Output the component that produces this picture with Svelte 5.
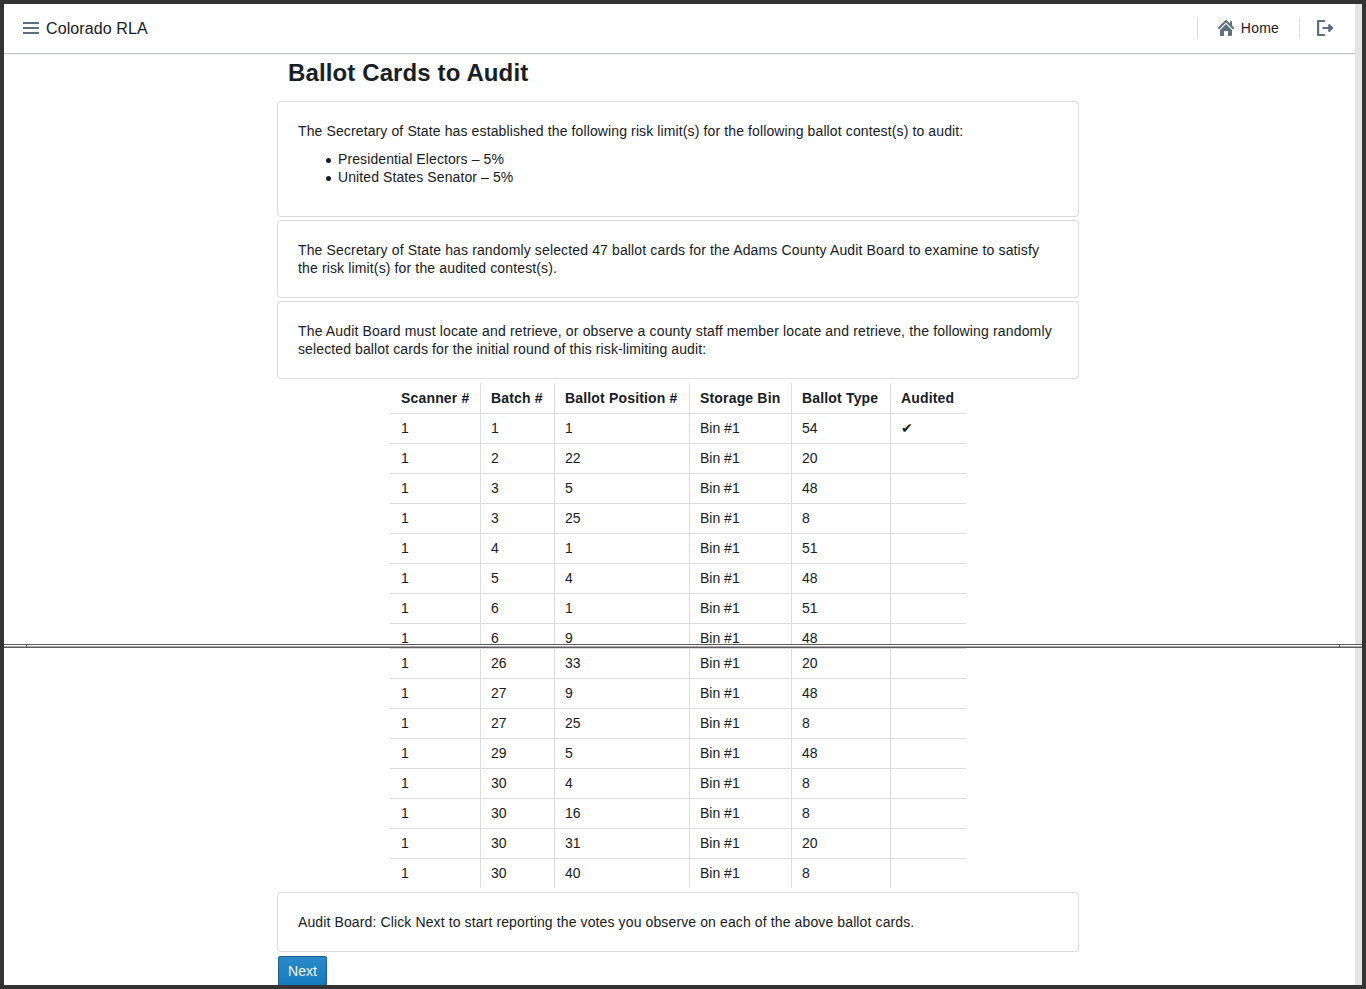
<script>
  const contests = ['Presidential Electors – 5%', 'United States Senator – 5%'];
  const first = [
    [1, 1, 54, true], [2, 22, 20], [3, 5, 48], [3, 25, 8],
    [4, 1, 51], [5, 4, 48], [6, 1, 51], [6, 9, 48]
  ];
  const last = [
    [26, 33, 20], [27, 9, 48], [27, 25, 8], [29, 5, 48],
    [30, 4, 8], [30, 16, 8], [30, 31, 20], [30, 40, 8]
  ];
</script>

{#snippet row(r)}
  <div class="row">
    <span>1</span><span>{r[0]}</span><span>{r[1]}</span><span>Bin #1</span><span>{r[2]}</span><span>{r[3] ? '✔' : ''}</span>
  </div>
{/snippet}

<div class="window">
  <div class="page">
    <header>
      <div class="brand">
        <svg width="16" height="16" viewBox="0 0 16 16"><path d="M0 3h16M0 8h16M0 13h16" stroke="#5c7080" stroke-width="2" /></svg>
        <span>Colorado RLA</span>
      </div>
      <nav>
        <i class="divider"></i>
        <button class="home">
          <svg width="16" height="16" viewBox="0 0 16 16"><path d="M2 10v5c0 .55.45 1 1 1h3v-5h4v5h3c.55 0 1-.45 1-1v-5L8 4l-6 6zm13.71-2.71L14 5.59V2c0-.55-.45-1-1-1s-1 .45-1 1v1.59L8.71.29C8.53.11 8.28 0 8 0s-.53.11-.71.29l-7 7a1.003 1.003 0 001.42 1.42L8 2.41l6.29 6.29c.18.19.43.3.71.3a1.003 1.003 0 00.71-1.71z" fill="#5c7080" /></svg>
          <span>Home</span>
        </button>
        <i class="divider"></i>
        <button class="logout" aria-label="Log out">
          <svg width="17" height="16" viewBox="0 0 17 16" fill="none" stroke="#5c7080" stroke-linecap="round" stroke-linejoin="round"><path d="M7.2 1H1.1v14h6.1" stroke-width="2.2" /><path d="M6.3 8H15" stroke-width="2.2" /><path d="M12.2 5L15.2 8l-3 3z" fill="#5c7080" stroke-width="2" /></svg>
        </button>
      </nav>
    </header>
    <main>
      <h1>Ballot Cards to Audit</h1>
      <section class="card">
        <p>The Secretary of State has established the following risk limit(s) for the following ballot contest(s) to audit:</p>
        <ul>{#each contests as c}<li>{c}</li>{/each}</ul>
      </section>
      <section class="card selected">The Secretary of State has randomly selected 47 ballot cards for the Adams County Audit Board to examine to satisfy the risk limit(s) for the audited contest(s).</section>
      <section class="card wide">The Audit Board must locate and retrieve, or observe a county staff member locate and retrieve, the following randomly <span class="tail">selected ballot cards for the initial round of this risk-limiting audit:</span></section>
      <div class="table top">
        <div class="row head">
          <span>Scanner #</span><span>Batch #</span><span>Ballot Position #</span><span>Storage Bin</span><span>Ballot Type</span><span>Audited</span>
        </div>
        {#each first as r}{@render row(r)}{/each}
      </div>
    </main>
  </div>
  <div class="tear"><i></i><i></i></div>
  <div class="page">
    <main>
      <div class="table">
        {#each last as r}{@render row(r)}{/each}
      </div>
      <section class="card">Audit Board: Click Next to start reporting the votes you observe on each of the above ballot cards.</section>
      <button class="next">Next</button>
    </main>
  </div>
</div>

<style>
  :global(body) { margin: 0; }
  .window {
    box-sizing: border-box;
    width: 1366px;
    height: 989px;
    border: 4px solid #333;
    overflow: hidden;
    background: #fff;
    color: #182026;
    font: 14px/18px "Liberation Sans", Arial, sans-serif;
  }
  .page {
    box-sizing: border-box;
    height: 640px;
    border-right: 7px solid #e4e4e4;
    overflow: hidden;
  }
  .tear + .page { height: 337px; }
  header {
    display: flex;
    justify-content: space-between;
    align-items: center;
    box-sizing: border-box;
    height: 49px;
    padding: 0 21px 1px 19px;
    box-shadow: 0 1px 0 #c4c8ca, 0 2px 0 #f2f3f3;
  }
  svg { display: block; }
  .brand, nav, .home { display: flex; align-items: center; }
  .brand { gap: 7px; font-size: 16px; letter-spacing: 0.1px; }
  .brand span { padding-top: 2px; }
  button { border: 0; background: none; padding: 0; font: inherit; color: inherit; }
  .home { gap: 7px; padding: 0 20px; letter-spacing: 0.2px; }
  .logout { margin-left: 17px; }
  .divider { width: 1px; height: 20px; background: #d9dbdc; }
  main { width: 800px; margin: 0 auto; position: relative; left: -1.5px; }
  h1 { margin: 0; padding: 5px 10px 14px; font-size: 24px; line-height: 30px; letter-spacing: 0.12px; }
  .card {
    box-sizing: border-box;
    padding: 20px;
    margin-bottom: 5px;
    border-radius: 3px;
    box-shadow: 0 0 0 1px #dbdcdd;
    letter-spacing: 0.118px;
  }
  .selected { letter-spacing: 0.138px; }
  .wide { letter-spacing: 0.152px; }
  .tail { letter-spacing: 0.115px; }
  p { margin: 0 0 10px; }
  ul { margin: 0 0 10px; padding-left: 28px; list-style: none; letter-spacing: 0.1px; }
  li { display: flex; align-items: center; gap: 7px; }
  li::before { content: ""; width: 5px; height: 5px; margin-top: 3px; border-radius: 50%; background: #182026; }
  .table { width: 576px; margin: 0 auto 5px; }
  .top { height: 261px; overflow: hidden; }
  .row {
    display: grid;
    grid-template-columns: 90px 74px 135px 102px 99px 76px;
    height: 30px;
  }
  .row span { padding: 6px 10px 6px 11px; box-shadow: inset 0 1px 0 #dbdcdd; white-space: nowrap; }
  .row span + span { box-shadow: inset 1px 1px 0 #dbdcdd; }
  .head { font-weight: bold; letter-spacing: 0.17px; }
  .head span { box-shadow: none; }
  .head span + span { box-shadow: inset 1px 0 0 #dbdcdd; }
  .tear {
    display: flex;
    justify-content: space-between;
    box-sizing: border-box;
    height: 4px;
    padding: 0 22px;
    background: linear-gradient(#5f5d60 0 1px, #fff 1px 2px, #aaa8ac 2px 3px, #5f5d60 3px 4px);
  }
  .tear i { width: 1px; height: 3px; background: #5f5d60; }
  .next {
    display: block;
    height: 30px;
    width: 49px;
    border-radius: 3px;
    color: #f5f8fa;
    background: linear-gradient(#2b89c8, #147bbf);
    box-shadow: inset 0 0 0 1px #1b5f8c;
  }
</style>
